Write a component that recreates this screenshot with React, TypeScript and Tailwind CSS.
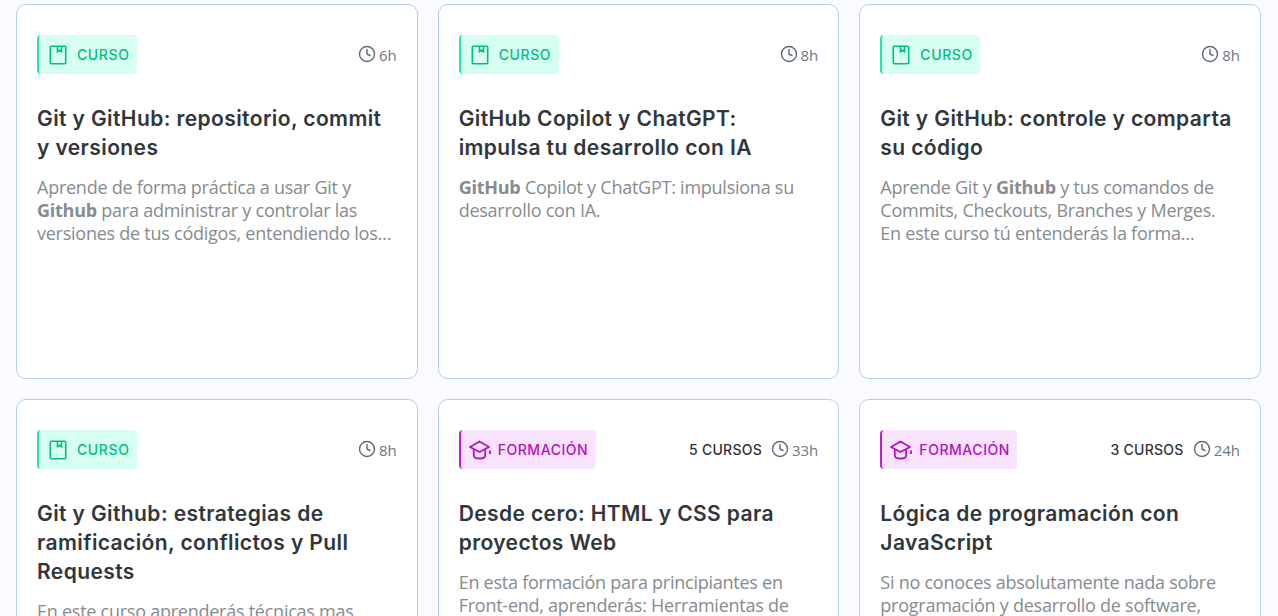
import React from 'react';
import { Clock } from 'lucide-react';

type Course = {
  kind: 'curso' | 'formacion';
  hours: string;
  count?: string;
  title: string;
  body: React.ReactNode;
};

const courses: Course[] = [
  {
    kind: 'curso',
    hours: '6h',
    title: 'Git y GitHub: repositorio, commit y versiones',
    body: (
      <>
        Aprende de forma práctica a usar Git y <b className="font-bold">Github</b> para administrar y controlar las
        versiones de tus códigos, entendiendo los conceptos y comandos principales
      </>
    ),
  },
  {
    kind: 'curso',
    hours: '8h',
    title: 'GitHub Copilot y ChatGPT: impulsa tu desarrollo con IA',
    body: (
      <>
        <b className="font-bold">GitHub</b> Copilot y ChatGPT: impulsiona su desarrollo con IA.
      </>
    ),
  },
  {
    kind: 'curso',
    hours: '8h',
    title: 'Git y GitHub: controle y comparta su código',
    body: (
      <>
        Aprende Git y <b className="font-bold">Github</b> y tus comandos de Commits, Checkouts, Branches y Merges. En
        este curso tú entenderás la forma profesional de trabajar en equipo
      </>
    ),
  },
  {
    kind: 'curso',
    hours: '8h',
    title: 'Git y Github: estrategias de ramificación, conflictos y Pull Requests',
    body: <>En este curso aprenderás técnicas mas avanzadas de Git</>,
  },
  {
    kind: 'formacion',
    hours: '33h',
    count: '5 CURSOS',
    title: 'Desde cero: HTML y CSS para proyectos Web',
    body: (
      <>
        En esta formación para principiantes en Front-end, aprenderás: Herramientas de desarrollo y mucho más sobre
        la web
      </>
    ),
  },
  {
    kind: 'formacion',
    hours: '24h',
    count: '3 CURSOS',
    title: 'Lógica de programación con JavaScript',
    body: (
      <>
        Si no conoces absolutamente nada sobre programación y desarrollo de software, esta formación es para ti
      </>
    ),
  },
];

const BookIcon = () => (
  <svg width="18" height="20" viewBox="0 0 18 20" fill="none" stroke="currentColor" strokeWidth="1.6">
    <rect x="1.3" y="1.3" width="15.4" height="17.4" rx="1" />
    <path d="M8.5 1.3v5.4l2-1.4 2 1.4V1.3" />
  </svg>
);

const CapIcon = () => (
  <svg width="22" height="20" viewBox="0 0 22 20" fill="none" stroke="currentColor" strokeWidth="1.8" strokeLinejoin="round">
    <path d="M10.5 1.5 1 7l9.5 5L20 7z" />
    <path d="M4.8 9.5v6c0 1.8 2.6 3 5.7 3s5.7-1.2 5.7-3v-6" />
    <path d="M21 10.5v3.5" />
  </svg>
);

const CourseCard = ({ course }: { course: Course }) => {
  const isCurso = course.kind === 'curso';

  return (
    <div className="h-[375px] rounded-[10px] border border-[#b7cde6] bg-white px-5 pt-[30px]">
      <div className="flex items-center justify-between">
        {isCurso ? (
          <div className="flex h-[39px] w-[100px] items-center gap-[10px] rounded-[4px] border-l-2 border-[#1ee8a8] bg-[#d6fff2] pl-[10px] text-[#00bd84]">
            <BookIcon />
            <span className="font-['Inter',sans-serif] text-[14px] font-medium tracking-[0.6px]">CURSO</span>
          </div>
        ) : (
          <div className="flex h-[39px] w-[137px] items-center gap-[7px] rounded-[4px] border-l-2 border-[#c01fd1] bg-[#fae3ff] pl-[8px] text-[#b310c4]">
            <CapIcon />
            <span className="font-['Inter',sans-serif] text-[14px] font-medium tracking-[0.55px]">FORMACIÓN</span>
          </div>
        )}
        <div className="flex items-center">
          {course.count && (
            <span className="mr-[9px] font-['Inter',sans-serif] text-[14px] font-medium tracking-[0.25px] text-[#2f3438]">
              {course.count}
            </span>
          )}
          <Clock size={18} strokeWidth={1.9} className="mr-[3px] -translate-y-[1px] text-[#5f6b7a]" />
          <span className="translate-y-[1px] text-[15px] text-[#6f7680]">{course.hours}</span>
        </div>
      </div>
      <h3 className="mt-[30px] font-['Inter',sans-serif] text-[21px] leading-[29px] font-semibold tracking-[0.4px] text-[#30363c]">
        {course.title}
      </h3>
      <p className="mt-[14px] line-clamp-3 pr-[3px] text-[18px] leading-[23px] tracking-[-0.25px] text-[#868b90]">
        {course.body}
      </p>
    </div>
  );
};

export default function App() {
  return (
    <div className="h-[616px] overflow-hidden bg-[#f9fbfe] pt-1 pl-4 pr-[17px] font-['Open_Sans',sans-serif]">
      <div className="grid grid-cols-3 gap-5">
        {courses.map((course) => (
          <CourseCard key={course.title} course={course} />
        ))}
      </div>
    </div>
  );
}
